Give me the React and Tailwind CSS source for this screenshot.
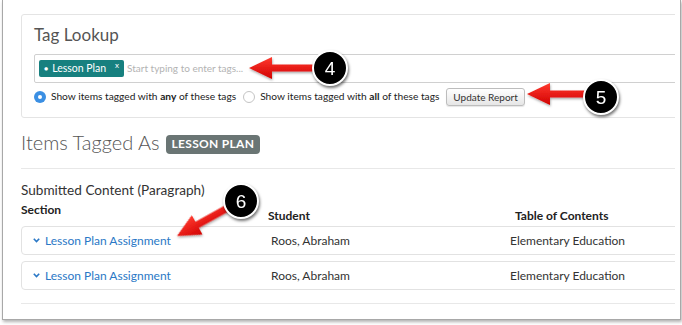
import React from "react";

function Callout({ n, className }) {
  return (
    <div
      className={`absolute w-[36px] h-[36px] rounded-full bg-black border-[2px] border-white shadow-[1px_2px_3px_rgba(0,0,0,0.55)] flex items-center justify-center text-white text-[19px] leading-none font-['Liberation_Sans',Arial,sans-serif] ${className}`}
    >
      {n}
    </div>
  );
}

function Arrows() {
  // red pointer arrows drawn over the screenshot
  const arrow = (len) =>
    `M0 0 L23 -11 L23 -3.5 L${len} -3.5 L${len} 3.5 L23 3.5 L23 11 Z`;
  return (
    <svg className="absolute left-0 top-0 pointer-events-none" width="682" height="325">
      <defs>
        <linearGradient id="red" x1="0" y1="0" x2="0" y2="1">
          <stop offset="0" stopColor="#ff3b30" />
          <stop offset="1" stopColor="#d10000" />
        </linearGradient>
        <filter id="sh" x="-20%" y="-50%" width="140%" height="200%">
          <feDropShadow dx="0.5" dy="1.5" stdDeviation="1" floodColor="#000" floodOpacity="0.35" />
        </filter>
      </defs>
      <g filter="url(#sh)">
        <path transform="translate(249 68)" d={arrow(66)} fill="url(#red)" />
        <path transform="translate(527 94)" d={arrow(60)} fill="url(#red)" />
        <path transform="translate(177 236) rotate(-29)" d={arrow(68)} fill="url(#red)" />
      </g>
    </svg>
  );
}

export default function App() {
  return (
    <div className="relative w-[682px] h-[325px] bg-white overflow-hidden font-['Lato','Open_Sans',sans-serif]">
      <div className="ml-[2px] w-[679px] h-[320px] border-x border-b border-[#a8a8a8] shadow-[1px_2px_3px_rgba(0,0,0,0.3)] overflow-hidden">
        <div className="ml-[18px] w-[654px] overflow-hidden pt-[14px]">
          {/* Tag Lookup panel */}
          <div className="w-[700px] border border-[#e4e4e4] rounded-[3px] pt-[10px] pb-[10px] pl-[12px]">
            <div className="text-[17px] leading-[20px] text-[#555]">Tag Lookup</div>
            <div className="mt-[9px] h-[29px] border border-[#d0d0d0] rounded-[2px] flex items-center pl-[4px]">
              <span className="h-[17px] w-[85px] rounded-[2px] bg-[#17807f] text-white text-[10.5px] flex items-center pl-[5px] relative">
                <span className="text-[7px] mr-[4px]">●</span>
                Lesson Plan
                <span className="absolute left-[76px] top-[0px] text-[8px] leading-[10px]">x</span>
              </span>
              <span className="ml-[3px] text-[10px] text-[#b3b3b3]">Start typing to enter tags...</span>
            </div>
            <div className="mt-[4px] h-[20px] flex items-center text-[10.2px] text-[#222]">
              <span className="w-[12px] h-[12px] rounded-full bg-[#3b8fe3] flex items-center justify-center">
                <span className="w-[4px] h-[4px] rounded-full bg-white"></span>
              </span>
              <span className="ml-[5px]">
                Show items tagged with <b>any</b> of these tags
              </span>
              <span className="ml-[7px] w-[12px] h-[12px] rounded-full border border-[#c4c4c4] bg-white"></span>
              <span className="ml-[5px]">
                Show items tagged with <b>all</b> of these tags
              </span>
              <button className="ml-[7px] h-[18px] px-[6px] rounded-[3px] border border-[#bdbdbd] bg-gradient-to-b from-white to-[#e6e6e6] text-[10px] text-[#333] shadow-[0_1px_1px_rgba(0,0,0,0.1)]">
                Update Report
              </button>
            </div>
          </div>

          {/* Items tagged heading */}
          <div className="mt-[10px] flex items-center gap-[6px] h-[28px]">
            <span className="text-[20px] font-light text-[#555]">Items Tagged As</span>
            <span className="mt-[4px] h-[19px] px-[6px] rounded-[4px] bg-[#6a7574] text-white text-[12px] font-bold tracking-[0.3px] flex items-center">
              LESSON PLAN
            </span>
          </div>
          <div className="mt-[12px] w-[700px] border-t border-[#e8e8e8]"></div>

          <div className="mt-[13px] text-[13.6px] leading-[16px] text-[#333]">Submitted Content (Paragraph)</div>
          <div className="mt-[4px] grid grid-cols-[247px_247px_1fr] items-end text-[12px] font-bold text-[#222] leading-[16px]">
            <div className="pb-[6px]">Section</div>
            <div>Student</div>
            <div>Table of Contents</div>
          </div>

          <div className="mt-[2px] flex flex-col gap-[6px] w-[700px]">
            {[0, 1].map((i) => (
              <div
                key={i}
                className="h-[29px] border border-[#e2e2e2] rounded-[4px] grid grid-cols-[249px_239px_1fr] items-center text-[12px]"
              >
                <div className="pl-[11px] flex items-center text-[#2a78c6]">
                  <svg width="7" height="5" viewBox="0 0 7 5" className="mr-[5px]">
                    <path d="M0.8 0.8 L3.5 3.6 L6.2 0.8" stroke="#2a78c6" strokeWidth="1.6" fill="none" />
                  </svg>
                  Lesson Plan Assignment
                </div>
                <div className="text-[#333]">Roos, Abraham</div>
                <div className="text-[#333]">Elementary Education</div>
              </div>
            ))}
          </div>
          <div className="mt-[13px] w-[700px] border-t border-[#e8e8e8]"></div>
        </div>
      </div>

      <Arrows />
      <Callout n="4" className="left-[312px] top-[50px]" />
      <Callout n="5" className="left-[583px] top-[79px]" />
      <Callout n="6" className="left-[223px] top-[183px]" />
    </div>
  );
}
